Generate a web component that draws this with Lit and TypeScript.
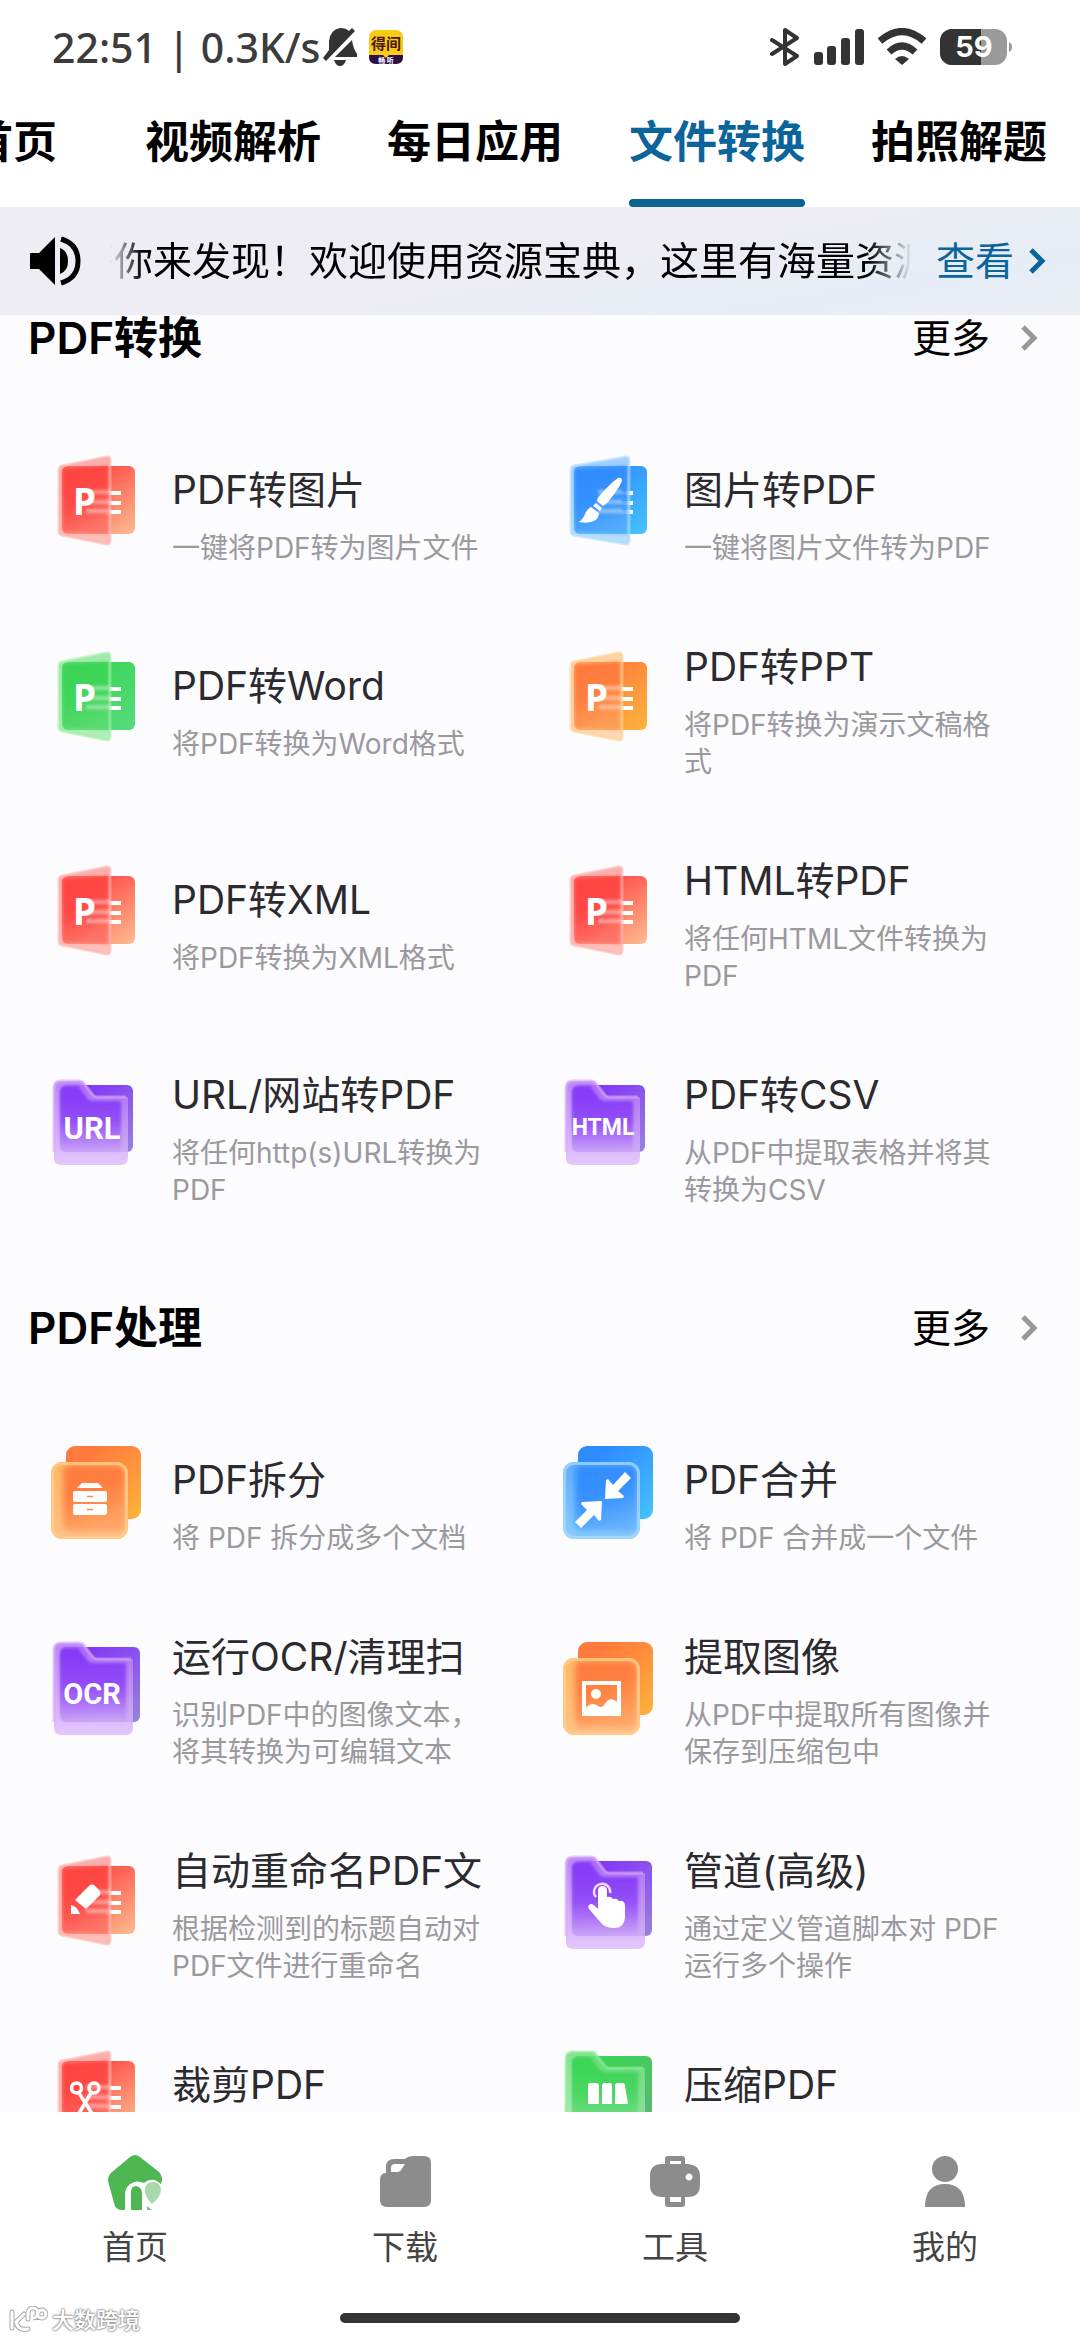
import { LitElement, html, svg, css, nothing } from "lit";
import { customElement, property, state } from "lit/decorators.js";
import { classMap } from "lit/directives/class-map.js";

type Shape = "book" | "folder" | "stack";

interface Tool {
  title: string;
  desc: string;
  shape: Shape;
  tone: string;
  mark: string;
}

interface Section {
  name: string;
  tools: Tool[];
}

interface Tone {
  from: string;
  to: string;
  edge: string;
  glassTop: string;
  glassEnd: string;
}

const TONES: Record<string, Tone> = {
  red: { from: "#ff4440", to: "#fcbd92", edge: "#ffb3ac", glassTop: "#f97a76", glassEnd: "#fb9a90" },
  green: { from: "#3bd455", to: "#55dc7c", edge: "#9df0a4", glassTop: "#62dd78", glassEnd: "#7fe490" },
  orange: { from: "#ff7a3c", to: "#fcb53c", edge: "#ffcf8c", glassTop: "#ffb868", glassEnd: "#ffc287" },
  blue: { from: "#2f8cff", to: "#46c4fb", edge: "#a9dcfb", glassTop: "#63aefc", glassEnd: "#8accfc" },
  purple: { from: "#8438f7", to: "#9784dc", edge: "#d7a8fa", glassTop: "#b274f6", glassEnd: "#dfbefb" },
  lime: { from: "#3bd455", to: "#5fb27a", edge: "#8eee96", glassTop: "#6edc80", glassEnd: "#a4eeb0" },
};

const SECTIONS: Section[] = [
  {
    name: "PDF转换",
    tools: [
      { title: "PDF转图片", desc: "一键将PDF转为图片文件", shape: "book", tone: "red", mark: "P" },
      { title: "图片转PDF", desc: "一键将图片文件转为PDF", shape: "book", tone: "blue", mark: "brush" },
      { title: "PDF转Word", desc: "将PDF转换为Word格式", shape: "book", tone: "green", mark: "P" },
      { title: "PDF转PPT", desc: "将PDF转换为演示文稿格式", shape: "book", tone: "orange", mark: "P" },
      { title: "PDF转XML", desc: "将PDF转换为XML格式", shape: "book", tone: "red", mark: "P" },
      { title: "HTML转PDF", desc: "将任何HTML文件转换为PDF", shape: "book", tone: "red", mark: "P" },
      { title: "URL/网站转PDF", desc: "将任何http(s)URL转换为PDF", shape: "folder", tone: "purple", mark: "URL" },
      { title: "PDF转CSV", desc: "从PDF中提取表格并将其转换为CSV", shape: "folder", tone: "purple", mark: "HTML" },
    ],
  },
  {
    name: "PDF处理",
    tools: [
      { title: "PDF拆分", desc: "将 PDF 拆分成多个文档", shape: "stack", tone: "orange", mark: "drawer" },
      { title: "PDF合并", desc: "将 PDF 合并成一个文件", shape: "stack", tone: "blue", mark: "merge" },
      { title: "运行OCR/清理扫", desc: "识别PDF中的图像文本，将其转换为可编辑文本", shape: "folder", tone: "purple", mark: "OCR" },
      { title: "提取图像", desc: "从PDF中提取所有图像并保存到压缩包中", shape: "stack", tone: "orange", mark: "picture" },
      { title: "自动重命名PDF文", desc: "根据检测到的标题自动对PDF文件进行重命名", shape: "book", tone: "red", mark: "pencil" },
      { title: "管道(高级)", desc: "通过定义管道脚本对 PDF 运行多个操作", shape: "folder", tone: "purple", mark: "hand" },
      { title: "裁剪PDF", desc: "对PDF页面进行裁剪", shape: "book", tone: "red", mark: "scissors" },
      { title: "压缩PDF", desc: "压缩PDF文件的大小", shape: "folder", tone: "lime", mark: "press" },
    ],
  },
];

const TABS = ["首页", "视频解析", "每日应用", "文件转换", "拍照解题"];

/** Coloured glyph in front of each tool: an opened book, a folder or two stacked cards. */
@customElement("tool-icon")
export class ToolIcon extends LitElement {
  @property() shape: Shape = "book";
  @property() tone = "red";
  @property() mark = "";

  static styles = css`
    :host {
      display: block;
      width: 96px;
      height: 124px;
    }
    svg {
      display: block;
      width: 100%;
      height: 100%;
    }
    .letter {
      font-family: "Noto Sans", sans-serif;
      font-weight: 700;
      fill: #fff;
    }
    .word {
      font-family: "Roboto", sans-serif;
      font-weight: 700;
      fill: #fff;
    }
  `;

  private renderMark() {
    switch (this.mark) {
      case "P":
        return svg`<text class="letter" x="25" y="59" font-size="37">P</text>`;
      case "URL":
        return svg`<text class="word" x="44" y="59" font-size="31" text-anchor="middle">URL</text>`;
      case "HTML":
        return svg`<text class="word" x="43" y="55" font-size="23" text-anchor="middle">HTML</text>`;
      case "OCR":
        return svg`<text class="word" x="44" y="62" font-size="29" text-anchor="middle">OCR</text>`;
      case "brush":
        return svg`
          <path fill="#fff" d="M58 22q4-1 4 3-2 6-14 21l-5 4-6-5q0-3 4-7Q52 26 58 22z"/>
          <path fill="#fff" d="M36 47l6 5-2 3-7-5z"/>
          <path fill="#fff" d="M31 51l8 6q0 5-5 8-7 3-15 1 5-4 6-8 2-5 6-7z"/>`;
      case "pencil":
        return svg`
          <path fill="#fff" d="M42 29q2-1 4 0l6 6q1 2 0 4L38 53 27 44z"/>
          <path fill="#fff" d="M23 49q6 1 9 9h-9z"/>`;
      case "scissors":
        return svg`
          <g fill="none" stroke="#fff" stroke-width="3.5">
            <circle cx="28.500" cy="37" r="5"/><circle cx="46" cy="37" r="5"/>
            <path d="M31 42l14 22M43 42L30 64"/>
          </g>`;
      case "drawer":
        return svg`
          <path fill="#fff" d="M34 37h16l5 5H29z"/>
          <rect fill="#fff" x="25" y="45" width="34" height="11" rx="2"/>
          <rect fill="#fff" x="25" y="58" width="34" height="11" rx="2"/>
          <path stroke="#ff8a45" stroke-width="1.500" d="M39 50.500h6M39 63.500h6"/>`;
      case "merge":
        return svg`
          <path fill="#fff" d="M65 26l6 6-13 13 6 5-1 2-18 1 1-19 2-1 5 6z"/>
          <path fill="#fff" d="M21 82l-6-6 12-12-6-6 1-2 20-1-1 19-2 1-5-6z"/>`;
      case "picture":
        return svg`
          <rect x="24" y="41" width="35" height="31" fill="none" stroke="#fff" stroke-width="4"/>
          <circle cx="36" cy="52" r="5" fill="#fff"/>
          <path fill="#fff" d="M25 66q8-7 13-2 4 3 7-2 5-9 13-1v11H25z"/>`;
      case "hand":
        return svg`
          <path fill="none" stroke="#f3dcff" stroke-width="2.500" d="M36 41a8 8 0 1 1 14-4"/>
          <path fill="#fff" d="M38 35q0-5 4.500-5t4.500 5v6q4-1 6 2 4-1 6 2 6-1 6 5v12q-1 10-11 10-8 0-12-4L29 53q-2-4 2-5 2 0 7 5z"/>`;
      case "press":
        return svg`<path fill="#fff" d="M28 34q0-2 2-2h6q3 0 3 3v18H28zM42 35q0-3 3-3h5q2 0 2 3v18H42zM55 34q0-2 3-2h4q3 0 3 3l3 18H55z"/>`;
      default:
        return nothing;
    }
  }

  private renderBook() {
    const t = TONES[this.tone];
    const w = this.mark === "brush" ? 69 : 62;
    return svg`
      <rect x="14" y="10" width="73" height="68" rx="6" fill="url(#body)"/>
      <g fill="#fff">
        <rect x="61" y="35" width="12" height="4"/>
        <rect x="61" y="45" width="12" height="4"/>
        <rect x="61" y="54" width="12" height="4"/>
      </g>
      <path d="M14 10L${w - 3} 1q3 0 3 3v80q0 4-3 4L14 79q-3-1-3-4V14q0-3 3-4z" fill="url(#glass)" fill-opacity=".6"/>
      <path d="M15 13L${w - 2} 10v68L15 76z" fill="url(#front)" filter="url(#soft)"/>
      <path d="M14 10L${w - 3} 1q3 0 3 3v80q0 4-3 4L14 79q-3-1-3-4V14q0-3 3-4z" fill="none" stroke="${t.edge}" stroke-opacity=".6" stroke-width="3"/>
      <g fill="#fff" fill-opacity=".42" filter="url(#soft)">
        <rect x="38" y="34" width="24" height="4"/>
        <rect x="38" y="44" width="24" height="4"/>
        <rect x="38" y="53" width="24" height="4"/>
      </g>
      ${this.renderMark()}`;
  }

  private renderFolder() {
    const t = TONES[this.tone];
    const small = this.mark === "URL" || this.mark === "HTML";
    const r = small ? 85 : 92;
    const f = small ? 80 : 85;
    const b = small ? 84 : 92;
    return svg`
      <rect x="12" y="5" width="${r - 12}" height="${b - 17}" rx="6" fill="url(#body)"/>
      <path d="M6 8q0-7 7-7h18q4 0 6 4l7 9q2 3 5 3h${f - 49}v${b - 24}q0 8-7 8H13q-7 0-7-7z" fill="url(#glass)" fill-opacity=".85"/>
      <path d="M12 12q0-6 6-6h12l9 12q2 3 6 3h${f - 52}v${b - 32}H12z" fill="url(#front)" filter="url(#soft)"/>
      <path d="M6 ${b - 12}V8q0-7 7-7h18q4 0 6 4l7 9q2 3 5 3h${f - 51}" fill="none" stroke="${t.edge}" stroke-opacity=".65" stroke-width="3"/>
      ${this.renderMark()}`;
  }

  private renderStack() {
    const t = TONES[this.tone];
    return svg`
      <rect x="18" y="0" width="75" height="73" rx="9" fill="url(#body)"/>
      <rect x="3" y="16" width="77" height="77" rx="11" fill="url(#glass)"/>
      <rect x="15" y="19" width="62" height="66" rx="7" fill="url(#front)" filter="url(#softer)"/>
      <rect x="4.500" y="17.500" width="74" height="74" rx="10" fill="none" stroke="${t.edge}" stroke-opacity=".7" stroke-width="3"/>
      ${this.renderMark()}`;
  }

  render() {
    const t = TONES[this.tone];
    const folder = this.shape === "folder";
    return html`<svg viewBox="0 -3 96 124" aria-hidden="true">
      <defs>
        <linearGradient id="body" x1=".3" y1=".1" x2="1" y2="1">
          <stop offset="0" stop-color=${t.from} /><stop offset="1" stop-color=${t.to} />
        </linearGradient>
        <linearGradient id="glass" x1="0" y1="0" x2="0" y2="1">
          <stop offset="0" stop-color=${t.glassTop} /><stop offset="1" stop-color=${t.glassEnd} />
        </linearGradient>
        <linearGradient id="front" x1="0" y1="0" x2=${folder ? "0" : ".3"} y2="1">
          <stop offset="0" stop-color=${t.from} />
          <stop offset=".5" stop-color=${t.from} stop-opacity=${folder ? ".75" : ".9"} />
          <stop offset="1" stop-color=${t.from} stop-opacity=${folder ? "0" : ".4"} />
        </linearGradient>
        <filter id="soft" x="-20%" y="-20%" width="140%" height="140%"><feGaussianBlur stdDeviation="1.5" /></filter>
        <filter id="softer" x="-20%" y="-20%" width="140%" height="140%"><feGaussianBlur stdDeviation="3" /></filter>
      </defs>
      ${this.shape === "book" ? this.renderBook() : folder ? this.renderFolder() : this.renderStack()}
    </svg>`;
  }
}

@customElement("status-bar")
export class StatusBar extends LitElement {
  static styles = css`
    :host {
      display: flex;
      align-items: center;
      justify-content: space-between;
      height: 94px;
      padding: 0 68px 0 52px;
      color: #3c3c3c;
      font-family: "Noto Sans", "Noto Sans CJK SC", sans-serif;
    }
    .side {
      display: flex;
      align-items: center;
      gap: 14px;
    }
    .left {
      gap: 2px;
    }
    .clock {
      font-size: 41px;
      font-weight: 500;
      line-height: 56px;
      white-space: pre;
    }
    .app {
      margin-left: 10px;
    }
    svg {
      display: block;
      flex: none;
    }
    .logo {
      font-family: "Noto Sans CJK SC", sans-serif;
      font-weight: 700;
    }
    .level {
      font-family: "Inter", sans-serif;
      font-weight: 700;
      fill: #fff;
    }
  `;

  render() {
    return html`
      <div class="side left">
        <span class="clock">22:51 | 0.3K/s</span>
        <svg width="34" height="40" viewBox="0 0 34 40" aria-label="静音">
          <path fill="#333" d="M6 23V14Q7 3 17 1q6 0 9 3l3-3 3 3L3 34l-3-3zM12 30L29 13q1 8 5 14v3zM11 33h12q-2 6-6 6t-6-6z" />
        </svg>
        <svg class="app" width="34" height="34" viewBox="0 0 34 34" aria-label="得间">
          <rect width="34" height="34" rx="7" fill="#f8cb16" />
          <path d="M0 25h14l3 3 3-3h14v2q0 7-7 7H7q-7 0-7-7z" fill="#2c0f4a" />
          <text class="logo" x="17" y="19" font-size="15" text-anchor="middle" fill="#4a1408">得间</text>
          <text class="logo" x="17" y="33" font-size="7" text-anchor="middle" fill="#fff">畅 听</text>
        </svg>
      </div>
      <div class="side">
        <svg width="30" height="38" viewBox="0 0 30 38" aria-label="蓝牙">
          <path d="M2 12l25 16-12 8V2l12 8L2 26" fill="none" stroke="#333" stroke-width="4" stroke-linecap="round" stroke-linejoin="round" />
        </svg>
        <svg width="50" height="38" viewBox="0 0 50 38" aria-label="信号">
          <g fill="#333">
            <rect x="0" y="24" width="9" height="13" rx="3" /><rect x="13" y="18" width="9" height="19" rx="3" />
            <rect x="27" y="10" width="9" height="27" rx="3" /><rect x="41" y="1" width="9" height="36" rx="3" />
          </g>
        </svg>
        <svg width="48" height="38" viewBox="0 0 48 38" aria-label="无线网络">
          <g fill="none" stroke="#333" stroke-width="7"><path d="M2 13q22-19 44 0M11 24q13-12 26 0" /></g>
          <path d="M17 31q7-6 14 0l-7 6z" fill="#333" />
        </svg>
        <svg width="72" height="38" viewBox="0 0 72 38" aria-label="电量">
          <defs><clipPath id="charge"><rect width="41" height="38" /></clipPath></defs>
          <rect y="1" width="67" height="36" rx="12" fill="#9a9a9a" />
          <rect y="1" width="67" height="36" rx="12" fill="#333" clip-path="url(#charge)" />
          <path d="M69 14q3 1 3 5t-3 5z" fill="#9a9a9a" />
          <text class="level" x="34" y="29" font-size="29" text-anchor="middle">59</text>
        </svg>
      </div>
    `;
  }
}

@customElement("app-root")
export class AppRoot extends LitElement {
  @state() private activeTab = 3;

  static styles = css`
    :host {
      position: relative;
      display: flex;
      flex-direction: column;
      height: 100vh;
      overflow: hidden;
      background: #fff;
      color: #000;
      font-family: "Inter", "Noto Sans CJK SC", sans-serif;
    }
    button {
      border: 0;
      padding: 0;
      background: none;
      color: inherit;
      font: inherit;
      text-align: inherit;
      cursor: pointer;
    }
    a {
      color: inherit;
      text-decoration: none;
    }
    svg {
      display: block;
      flex: none;
    }

    .tabs {
      display: flex;
      flex: none;
      height: 113px;
      margin-left: -86px;
      overflow: hidden;
    }
    .tab {
      display: flex;
      flex: none;
      flex-direction: column;
      align-items: center;
      justify-content: space-between;
      min-width: 198px;
      padding: 18px 33px 0;
      font-size: 44px;
      font-weight: 600;
      line-height: 60px;
    }
    .tab::after {
      content: "";
      width: 100%;
      height: 8px;
      border-radius: 4px;
    }
    .active {
      color: #0b649a;
    }
    .active::after {
      background: #0a638f;
    }

    .notice {
      display: flex;
      flex: none;
      align-items: center;
      height: 108px;
      padding: 0 34px 0 30px;
      background: linear-gradient(170deg, #eeedf3 50%, #e6edf6 80%, #ecedf4);
      font-size: 39px;
      line-height: 56px;
    }
    .marquee {
      flex: 1;
      min-width: 0;
      margin: 0 24px 0 28px;
      overflow: hidden;
      white-space: nowrap;
      mask-image: linear-gradient(90deg, transparent, #000 32px, #000 calc(100% - 44px), transparent);
    }
    .ticker {
      display: block;
      margin-left: -35px;
    }
    .view {
      display: flex;
      align-items: center;
      gap: 14px;
      color: #0b649a;
    }

    .content {
      flex: 1;
      min-height: 0;
      overflow-y: auto;
      scrollbar-width: none;
      background: #fcfbfe;
    }
    .section + .section {
      margin-top: 86px;
    }
    .head {
      display: flex;
      align-items: center;
      justify-content: space-between;
      padding: 0 42px 0 28px;
      line-height: 46px;
    }
    .name {
      margin: 0;
      font-size: 44px;
      font-weight: 600;
    }
    .more {
      display: flex;
      align-items: center;
      gap: 30px;
      font-size: 39px;
    }
    .grid {
      display: grid;
      grid-template-columns: 1fr 1fr;
      row-gap: 53px;
      margin-top: 92px;
      padding: 0 28px;
    }
    .tool {
      display: flex;
      align-items: center;
      gap: 28px;
      padding: 0 48px 0 20px;
    }
    .tool tool-icon {
      flex: none;
    }
    .text {
      flex: 1;
      min-width: 0;
      padding: 10px 0;
    }
    .title {
      display: block;
      overflow: hidden;
      color: #2b2a2e;
      font-size: 39px;
      line-height: 54px;
      white-space: nowrap;
    }
    .desc {
      display: block;
      margin-top: 13px;
      color: #9a999e;
      font-size: 28px;
      line-height: 37px;
    }

    .dock {
      display: flex;
      flex: none;
      flex-direction: column;
      align-items: center;
      gap: 46px;
      padding: 42px 0 17px;
      background: #fff;
    }
    .items {
      display: grid;
      grid-template-columns: repeat(4, 1fr);
      width: 100%;
    }
    .item {
      display: flex;
      flex-direction: column;
      align-items: center;
      gap: 17px;
      color: #444;
      font-size: 33px;
      line-height: 40px;
    }
    .handle {
      width: 37%;
      height: 10px;
      border-radius: 5px;
      background: #333;
    }

    .watermark {
      position: absolute;
      bottom: 6px;
      left: 8px;
      display: flex;
      align-items: center;
      gap: 4px;
      color: #fff;
      font-size: 22px;
      font-weight: 500;
      line-height: 28px;
      text-shadow: 0 0 2px #888, 0 0 2px #888, 0 0 3px #aaa;
    }
  `;

  private chevron(color: string) {
    return html`<svg width="18" height="28" viewBox="0 0 18 28" aria-hidden="true">
      <path d="M3 3l11 11L3 25" fill="none" stroke=${color} stroke-width="5" />
    </svg>`;
  }

  private renderTool(t: Tool) {
    return html`<button class="tool">
      <tool-icon .shape=${t.shape} .tone=${t.tone} .mark=${t.mark}></tool-icon>
      <span class="text"><span class="title">${t.title}</span><span class="desc">${t.desc}</span></span>
    </button>`;
  }

  private renderSection(s: Section) {
    return html`<section class="section">
      <header class="head">
        <h2 class="name">${s.name}</h2>
        <a class="more" href="#more">更多 ${this.chevron("#98979b")}</a>
      </header>
      <div class="grid">${s.tools.map((t) => this.renderTool(t))}</div>
    </section>`;
  }

  private renderDock() {
    const icons = [
      svg`<path fill="#4fb752" d="M23 3q5-4 10 0l19 15q3 3 3 8l-1 4q-9-8-17-1-8-4-15 2-4 4-4 9v16h-3q-7 0-8-7L1 27q0-6 4-9z"/>
        <path fill="#4fb752" d="M24 56V38q0-6 5-6 6 1 6 8v16z"/>
        <path fill="#a9d8ad" d="M38 35q1-7 8-7t8 7q0 8-9 15-8-8-7-15z"/>
        <path fill="#7fbf85" d="M40 52l5 4h-5z"/>`,
      svg`<path fill="#8c8c8c" fill-rule="evenodd" d="M3 26q0-7 6-7V13q0-8 8-8h11q3-3 8-3h11q7 0 7 7v37q0 7-7 7H10q-7 0-7-7zM14 18V14q0-4 4-4h10l-4 6q-1 2-5 2z"/>`,
      svg`<path fill="#8c8c8c" fill-rule="evenodd" d="M18 10V5q0-3 3-3h14q3 0 3 3v5h3q12 1 12 12v9q0 12-12 12h-3v7q0 3-3 3H21q-3 0-3-3v-7h-3Q3 43 3 31v-9q0-12 12-12zM23 7v3h11V7zM23 43v5h11v-5zM42 19.500a3.500 3.500 0 1 0 .1 0z"/>`,
      svg`<circle cx="28" cy="15" r="13" fill="#8c8c8c"/><path fill="#8c8c8c" d="M8 53q0-23 20-23t20 23z"/>`,
    ];
    const labels = ["首页", "下载", "工具", "我的"];
    return html`<footer class="dock">
      <nav class="items">
        ${labels.map(
          (label, i) => html`<button class="item">
            <svg width="56" height="56" viewBox="0 0 56 56" aria-hidden="true">${icons[i]}</svg>${label}
          </button>`,
        )}
      </nav>
      <div class="handle"></div>
    </footer>`;
  }

  render() {
    return html`
      <status-bar></status-bar>
      <nav class="tabs">
        ${TABS.map(
          (tab, i) =>
            html`<button class=${classMap({ tab: true, active: i === this.activeTab })} @click=${() => (this.activeTab = i)}>
              ${tab}
            </button>`,
        )}
      </nav>
      <div class="notice">
        <svg width="52" height="50" viewBox="0 0 52 50" aria-hidden="true">
          <path d="M0 17h9L25 1v48L9 33H0zM30 12q8 3 8 13t-8 13z" />
          <path d="M31 3q17 5 17 22T31 47" fill="none" stroke="#000" stroke-width="5" />
        </svg>
        <div class="marquee"><span class="ticker">等你来发现！欢迎使用资源宝典，这里有海量资源</span></div>
        <a class="view" href="#view">查看${this.chevron("#0b649a")}</a>
      </div>
      <main class="content">${SECTIONS.map((s) => this.renderSection(s))}</main>
      ${this.renderDock()}
      <div class="watermark">
        <svg width="40" height="28" viewBox="0 0 40 28" aria-hidden="true">
          <g fill="none" stroke="#aaa" stroke-width="5" stroke-linecap="round">
            <path d="M4 6v16M16 8l-8 8q2 9 12 7M20 13V7a5 5 0 1 1 5 5q4 0 5-5a4 4 0 1 1 4 5q-4 0-5-5" />
          </g>
          <g fill="none" stroke="#fff" stroke-width="3" stroke-linecap="round">
            <path d="M4 6v16M16 8l-8 8q2 9 12 7M20 13V7a5 5 0 1 1 5 5q4 0 5-5a4 4 0 1 1 4 5q-4 0-5-5" />
          </g>
        </svg>
        <span>大数跨境</span>
      </div>
    `;
  }
}
